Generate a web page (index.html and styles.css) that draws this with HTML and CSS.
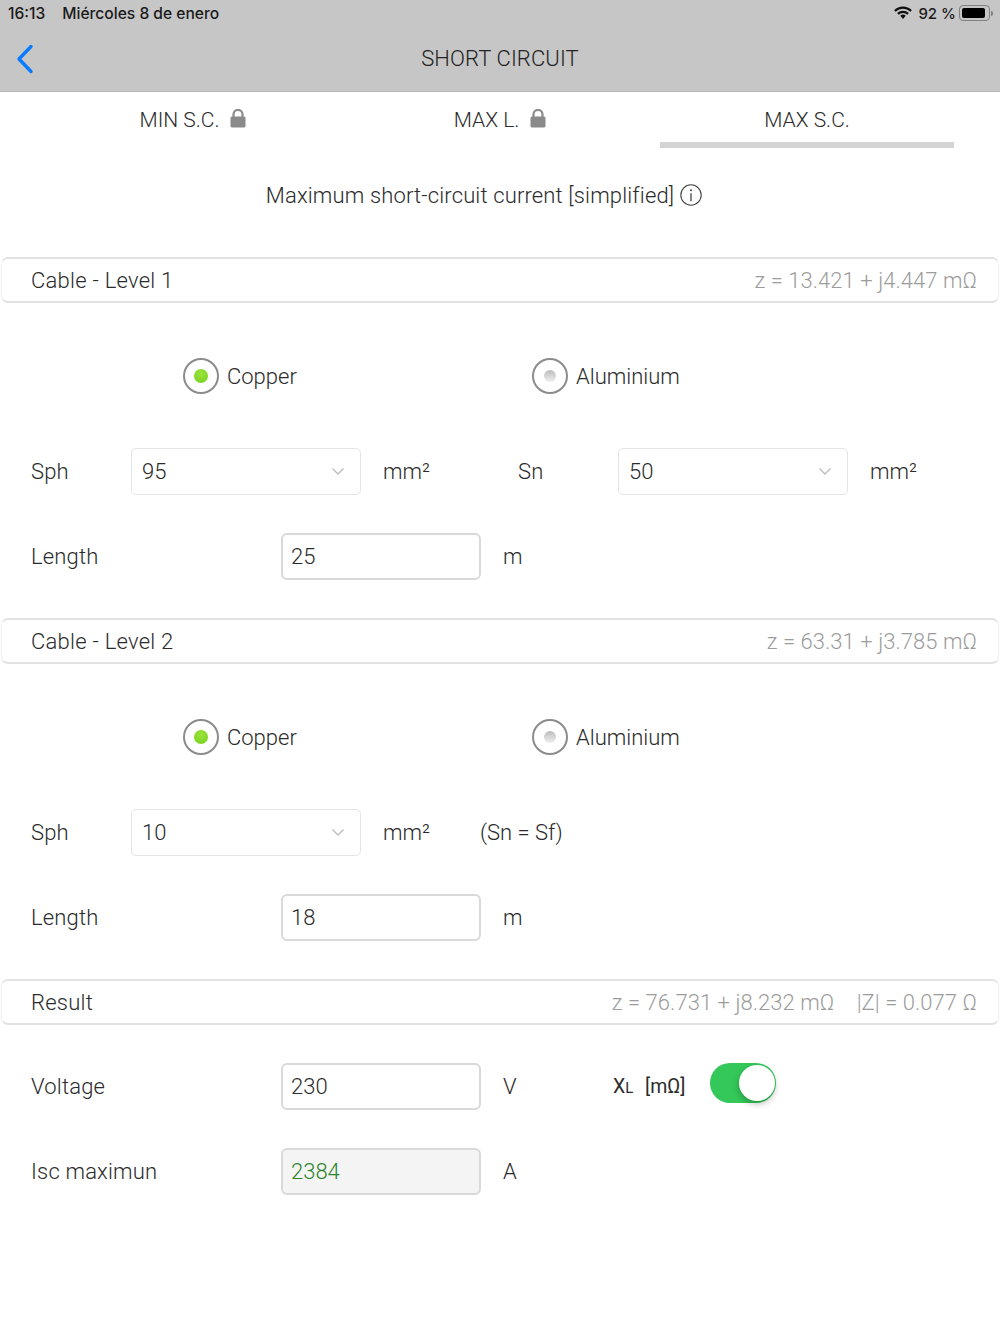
FILE: index.html
```html
<!DOCTYPE html>
<html lang="en">
<head>
    <meta charset="UTF-8">
    <title>Short Circuit</title>
    <link rel="stylesheet" href="styles.css">
</head>
<body>
    <header class="top">
        <div class="status">
            <span class="status-time">16:13</span>
            <span class="status-date">Miércoles 8 de enero</span>
            <div class="status-right">
                <svg class="wifi" width="18" height="14" viewBox="0 0 20 15">
                    <path d="M1 5.2a13 13 0 0 1 18 0" fill="none" stroke="#111" stroke-width="2.4"/>
                    <path d="M4.3 8.5a8.4 8.4 0 0 1 11.4 0" fill="none" stroke="#111" stroke-width="2.4"/>
                    <path d="M10 9.3a4.6 4.6 0 0 1 3 1.2l-3 3.6-3-3.6a4.6 4.6 0 0 1 3-1.2z" fill="#111"/>
                </svg>
                <span class="status-level">92 %</span>
                <div class="battery"><div class="battery-fill"></div></div>
                <div class="battery-tip"></div>
            </div>
        </div>
        <div class="nav">
            <svg class="back" width="18" height="30" viewBox="0 0 18 30">
                <path d="M15 2.5 3 15l12 12.5" fill="none" stroke="#0a7aff" stroke-width="3.4" stroke-linecap="round" stroke-linejoin="round"/>
            </svg>
            <h1>SHORT CIRCUIT</h1>
        </div>
    </header>

    <nav class="tabs">
        <div class="tab">MIN S.C.
            <svg class="lock" width="16" height="19" viewBox="0 0 16 19"><path d="M3.5 8V5.5a4.5 4.5 0 0 1 9 0V8" fill="none" stroke="#8a8a8a" stroke-width="2.2"/><rect x="0.5" y="7.5" width="15" height="11" rx="1.5" fill="#8a8a8a"/></svg>
        </div>
        <div class="tab">MAX L.
            <svg class="lock" width="16" height="19" viewBox="0 0 16 19"><path d="M3.5 8V5.5a4.5 4.5 0 0 1 9 0V8" fill="none" stroke="#8a8a8a" stroke-width="2.2"/><rect x="0.5" y="7.5" width="15" height="11" rx="1.5" fill="#8a8a8a"/></svg>
        </div>
        <div class="tab active">MAX S.C.</div>
    </nav>

    <div class="page-title">
        <span>Maximum short-circuit current [simplified]</span>
        <svg class="info" width="22" height="22" viewBox="0 0 22 22">
            <circle cx="11" cy="11" r="10.2" fill="none" stroke="#444" stroke-width="1.1"/>
            <circle cx="11" cy="6.3" r="1" fill="#444"/>
            <path d="M11 9.3v8" stroke="#444" stroke-width="1.3"/>
        </svg>
    </div>

    <section>
        <div class="bar">
            <span class="bar-name">Cable - Level 1</span>
            <span class="bar-value">z = 13.421 + j4.447 mΩ</span>
        </div>
        <div class="radios">
            <div class="radio-option"><div class="radio"><div class="dot on"></div></div>Copper</div>
            <div class="radio-option"><div class="radio"><div class="dot"></div></div>Aluminium</div>
        </div>
        <div class="row">
            <span class="label">Sph</span>
            <div class="select">95
                <svg width="14" height="9" viewBox="0 0 14 9"><path d="M1.5 1.5 7 7l5.5-5.5" fill="none" stroke="#bdbdbd" stroke-width="1.4"/></svg>
            </div>
            <span class="unit mm">mm²</span>
            <span class="label">Sn</span>
            <div class="select">50
                <svg width="14" height="9" viewBox="0 0 14 9"><path d="M1.5 1.5 7 7l5.5-5.5" fill="none" stroke="#bdbdbd" stroke-width="1.4"/></svg>
            </div>
            <span class="unit mm">mm²</span>
        </div>
        <div class="row">
            <span class="label wide">Length</span>
            <div class="field">25</div>
            <span class="unit">m</span>
        </div>
    </section>

    <section>
        <div class="bar">
            <span class="bar-name">Cable - Level 2</span>
            <span class="bar-value">z = 63.31 + j3.785 mΩ</span>
        </div>
        <div class="radios">
            <div class="radio-option"><div class="radio"><div class="dot on"></div></div>Copper</div>
            <div class="radio-option"><div class="radio"><div class="dot"></div></div>Aluminium</div>
        </div>
        <div class="row">
            <span class="label">Sph</span>
            <div class="select">10
                <svg width="14" height="9" viewBox="0 0 14 9"><path d="M1.5 1.5 7 7l5.5-5.5" fill="none" stroke="#bdbdbd" stroke-width="1.4"/></svg>
            </div>
            <span class="unit note-before">mm²</span>
            <span>(Sn = Sf)</span>
        </div>
        <div class="row">
            <span class="label wide">Length</span>
            <div class="field">18</div>
            <span class="unit">m</span>
        </div>
    </section>

    <section>
        <div class="bar">
            <span class="bar-name">Result</span>
            <span class="bar-value">z = 76.731 + j8.232 mΩ <span class="bar-gap">|Z| = 0.077 Ω</span></span>
        </div>
        <div class="row first">
            <span class="label wide">Voltage</span>
            <div class="field">230</div>
            <span class="unit short">V</span>
            <span class="xl">X<small>L</small>&nbsp; [mΩ]</span>
            <div class="toggle"><div class="knob"></div></div>
        </div>
        <div class="row">
            <span class="label wide">Isc maximun</span>
            <div class="field result">2384</div>
            <span class="unit">A</span>
        </div>
    </section>
</body>
</html>
```

FILE: styles.css
```css
body {
    margin: 0;
    height: 1334px;
    overflow: hidden;
    background-color: white;
    font-family: 'Roboto', 'Liberation Sans', sans-serif;
    font-weight: 300;
    font-size: 22px;
    color: #2b2b2b;
}
.top {
    height: 92px;
    box-sizing: border-box;
    background-color: #c6c6c6;
    border-bottom: 1px solid #b8b8b8;
}
.status {
    height: 26px;
    display: flex;
    align-items: center;
    padding: 0 8px;
    font-family: 'Inter', 'Liberation Sans', sans-serif;
    font-weight: 500;
    font-size: 15.6px;
    color: #1a1a1a;
}
.status-date {
    margin-left: 17px;
}
.status-right {
    margin-left: auto;
    display: flex;
    align-items: center;
}
.status-level {
    font-size: 15px;
}
.wifi {
    margin-right: 6px;
}
.battery {
    width: 31px;
    height: 16px;
    box-sizing: border-box;
    margin-left: 3px;
    padding: 2px;
    border: 1px solid #808080;
    border-radius: 4px;
}
.battery-fill {
    width: 92%;
    height: 100%;
    background-color: #000;
    border-radius: 2px;
}
.battery-tip {
    width: 2px;
    height: 5px;
    margin-left: 1px;
    margin-right: -1px;
    background-color: #808080;
    border-radius: 0 2px 2px 0;
}
.nav {
    height: 65px;
    display: flex;
    align-items: center;
    justify-content: center;
    position: relative;
}
.nav h1 {
    margin: 0;
    font-size: 22px;
    font-weight: 300;
    letter-spacing: 0.1px;
    color: #222;
}
.back {
    position: absolute;
    left: 16px;
    top: 18px;
}
.tabs {
    display: grid;
    grid-template-columns: repeat(3, 307px);
    justify-content: center;
    height: 58px;
}
.tab {
    display: flex;
    align-items: flex-start;
    justify-content: center;
    gap: 11px;
    height: 50px;
    padding-top: 15px;
    margin: 0 6.5px;
    box-sizing: border-box;
    font-size: 21px;
    line-height: 27px;
}
.tab.active {
    height: 56px;
    border-bottom: 6px solid #d4d4d4;
}
.lock {
    margin-top: 2px;
}
.page-title {
    display: flex;
    align-items: center;
    justify-content: center;
    gap: 6px;
    height: 48px;
    margin-top: 21px;
    margin-left: -32px;
    margin-bottom: 38px;
    letter-spacing: 0.15px;
}
.bar {
    height: 46px;
    margin: 0 1px;
    box-sizing: border-box;
    display: flex;
    align-items: center;
    justify-content: space-between;
    padding: 0 21px 0 29px;
    border: 2px solid #e2e2e2;
    border-left: 1px solid #eeeeee;
    border-right: 1px solid #eeeeee;
    border-radius: 7px;
}
.bar-name {
    letter-spacing: 0.25px;
}
.bar-value {
    color: #9c9c9c;
    letter-spacing: 0.05px;
}
.bar-gap {
    margin-left: 17px;
}
.radios {
    display: flex;
    align-items: center;
    height: 36px;
    margin-top: 55px;
    margin-bottom: 54px;
    padding-left: 183px;
}
.radio-option {
    width: 349px;
    display: flex;
    align-items: center;
    gap: 8px;
}
.radio {
    width: 36px;
    height: 36px;
    box-sizing: border-box;
    display: flex;
    align-items: center;
    justify-content: center;
    background-color: white;
    border: 2px solid #8c8c8c;
    border-radius: 50%;
}
.dot {
    width: 12px;
    height: 12px;
    border-radius: 50%;
    background: linear-gradient(#bcbcbc, #efefef);
}
.dot.on {
    width: 14px;
    height: 14px;
    background: radial-gradient(circle at 50% 35%, #9be33c, #74cf1c);
}
.row {
    display: flex;
    align-items: center;
    height: 47px;
    margin-bottom: 38px;
    padding-left: 31px;
}
.row.first {
    margin-top: 38px;
}
.label {
    width: 100px;
    flex: none;
    letter-spacing: 0.18px;
}
.label.wide {
    width: 250px;
}
.select {
    width: 230px;
    height: 47px;
    flex: none;
    box-sizing: border-box;
    display: flex;
    align-items: center;
    justify-content: space-between;
    padding: 0 15px 0 10px;
    border: 1px solid #e4e4e4;
    border-radius: 5px;
}
.unit {
    margin-left: 22px;
    flex: none;
}
.unit.mm {
    width: 113px;
    margin-right: 22px;
}
.unit.note-before {
    width: 97px;
}
.unit.short {
    width: 88px;
    margin-right: 22px;
}
.field {
    width: 200px;
    height: 47px;
    flex: none;
    box-sizing: border-box;
    display: flex;
    align-items: center;
    padding-left: 8px;
    border: 2px solid #d9d9d9;
    border-radius: 6px;
}
.field.result {
    background-color: #f4f4f4;
    color: #2a842a;
}
.xl {
    width: 97px;
    flex: none;
    font-size: 19.5px;
    font-weight: 400;
}
.xl small {
    font-size: 15px;
    margin-right: 2px;
}
.toggle {
    width: 66px;
    height: 40px;
    margin-top: -7px;
    box-sizing: border-box;
    display: flex;
    justify-content: flex-end;
    padding: 2px 1px;
    background-color: #34c759;
    border-radius: 20px;
}
.knob {
    width: 36px;
    height: 36px;
    background-color: white;
    border-radius: 50%;
    box-shadow: 0 3px 6px rgba(0, 0, 0, 0.25);
}
```
